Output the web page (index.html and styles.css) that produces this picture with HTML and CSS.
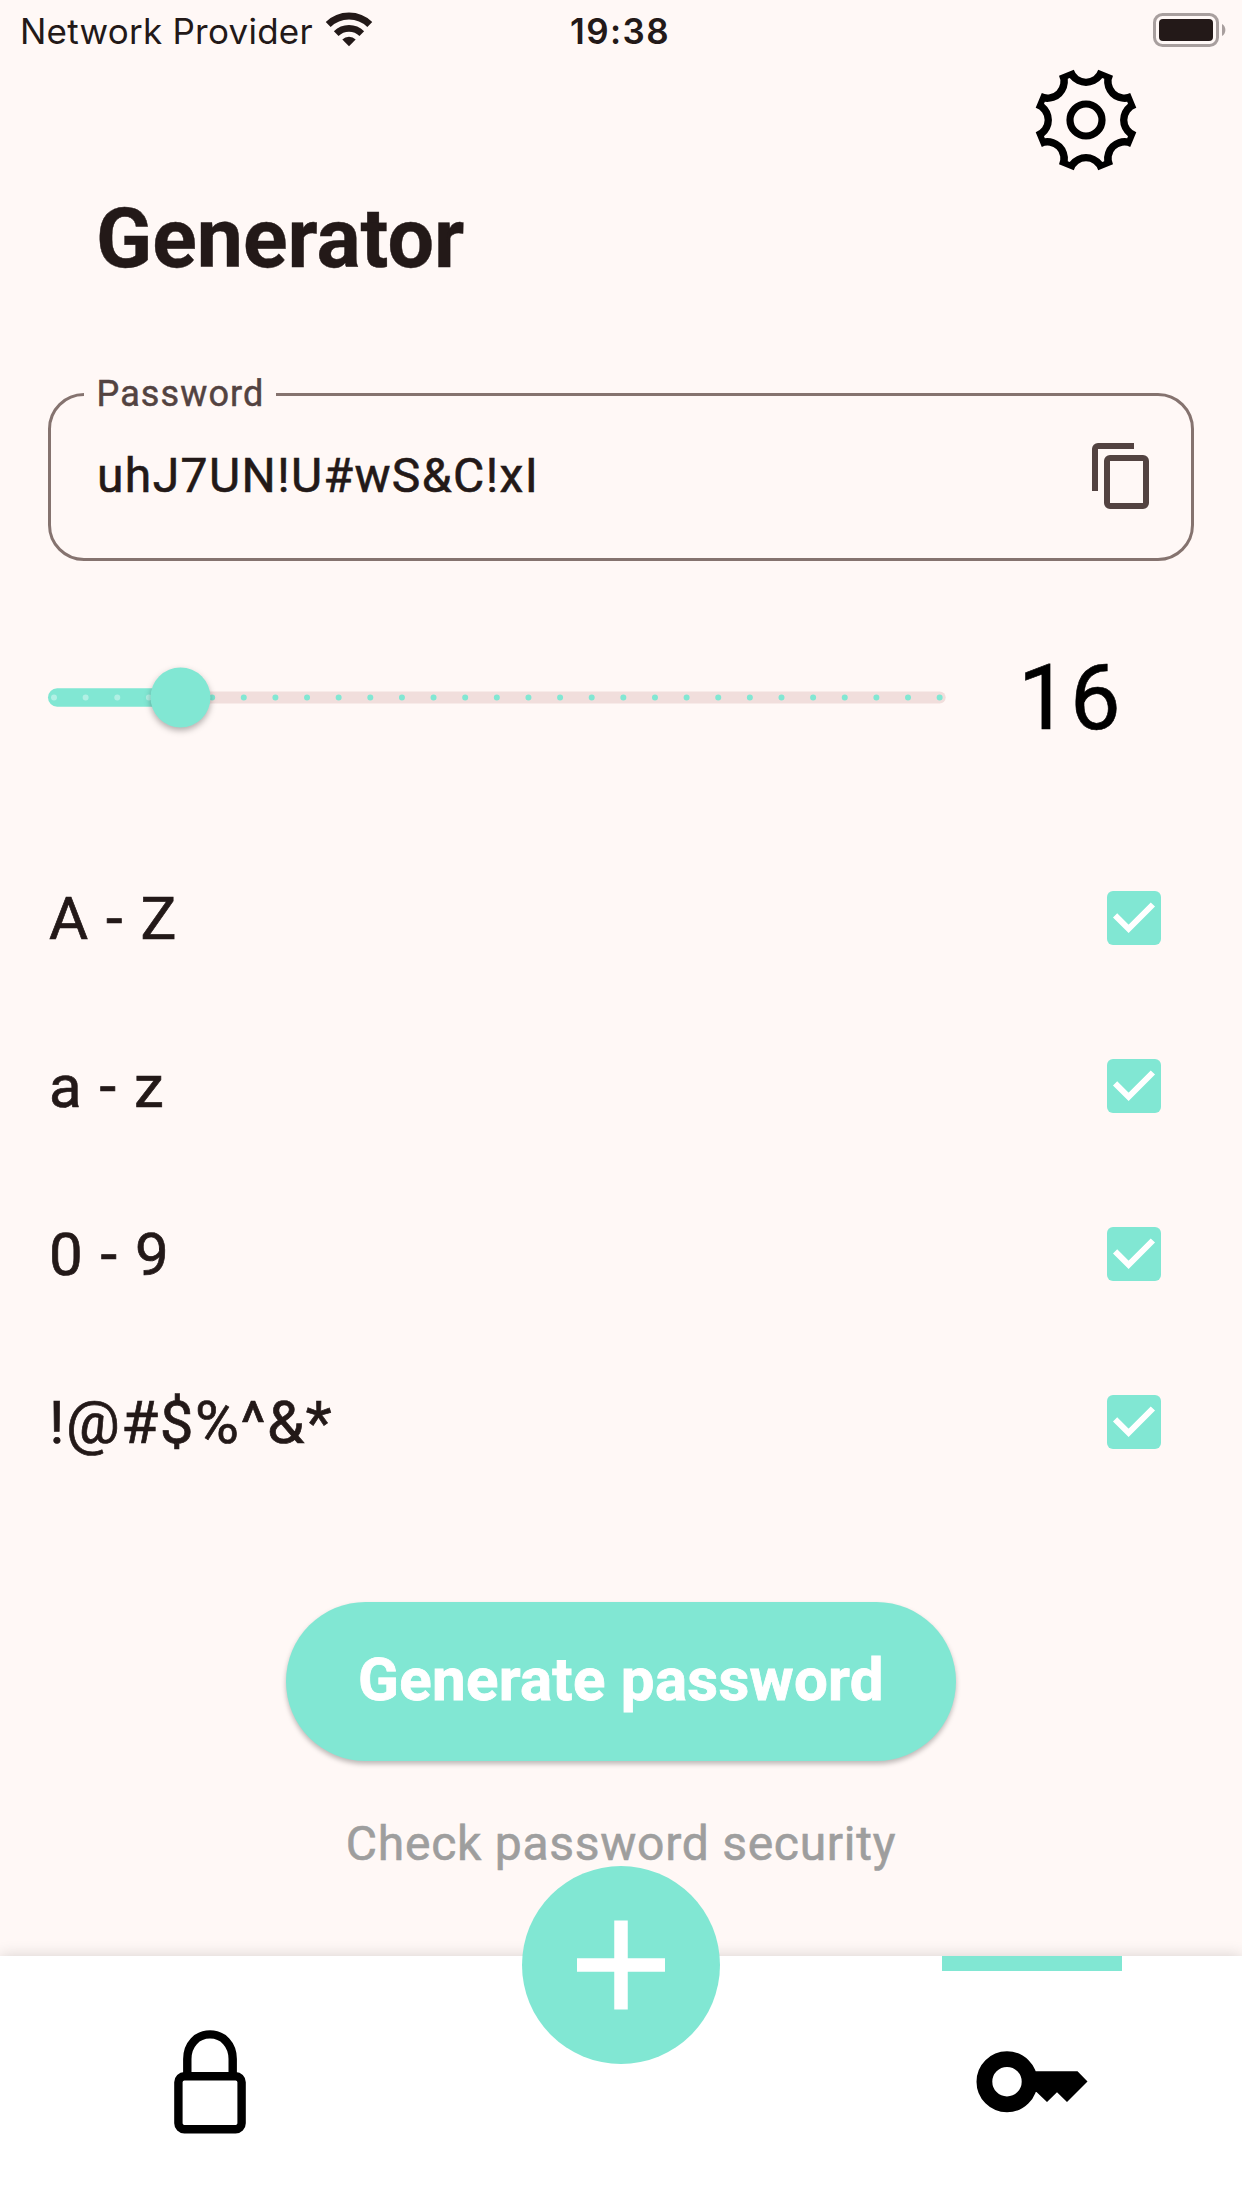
FILE: index.html
```html
<!DOCTYPE html>
<html lang="en">
<head>
<meta charset="utf-8">
<title>Generator</title>
<link rel="stylesheet" href="styles.css">
</head>
<body>
<div class="screen">
  <div class="status">
    <div class="carrier"><span class="carrier-name">Network Provider</span>
      <svg class="wifi" width="48" height="36" viewBox="0 0 48 36"><g fill="none" stroke="#231918"><path d="M3.2 12.6A29.6 29.6 0 0 1 44.8 12.6" stroke-width="7"/><path d="M11.2 21.6A18.2 18.2 0 0 1 36.8 21.6" stroke-width="6.6"/></g><path d="M24 34.2L17.3 27.4A9.5 9.5 0 0 1 30.7 27.4Z" fill="#231918"/></svg>
    </div>
    <span class="clock">19:38</span>
    <svg class="battery" width="76" height="36" viewBox="0 0 76 36"><rect x="2.5" y="2.5" width="63" height="31" rx="8" fill="none" stroke="#a89f9e" stroke-width="3"/><rect x="7" y="7" width="54" height="22" rx="4" fill="#231918"/><path d="M70 12a7 7 0 0 1 0 12Z" fill="#a89f9e"/></svg>
  </div>
  <div class="toolbar">
    <svg width="120" height="120" viewBox="-60 -60 120 120"><path fill-rule="evenodd" d="M-12.2-50.3A12.8 12.8 0 0 0 12.2-50.3L27-44.2A12.8 12.8 0 0 0 44.2-27L50.3-12.2A12.8 12.8 0 0 0 50.3 12.2L44.2 27A12.8 12.8 0 0 0 27 44.2L12.2 50.3A12.8 12.8 0 0 0-12.2 50.3L-27 44.2A12.8 12.8 0 0 0-44.2 27L-50.3 12.2A12.8 12.8 0 0 0-50.3-12.2L-44.2-27A12.8 12.8 0 0 0-27-44.2ZM-16.3-42A20.7 20.7 0 0 0 16.3-42L18.2-41.2A20.7 20.7 0 0 0 41.2-18.2L42-16.3A20.7 20.7 0 0 0 42 16.3L41.2 18.2A20.7 20.7 0 0 0 18.2 41.2L16.3 42A20.7 20.7 0 0 0-16.3 42L-18.2 41.2A20.7 20.7 0 0 0-41.2 18.2L-42 16.3A20.7 20.7 0 0 0-42-16.3L-41.2-18.2A20.7 20.7 0 0 0-18.2-41.2Z"/><circle r="16" fill="none" stroke="#000" stroke-width="7.2"/></svg>
  </div>
  <h1 class="title">Generator</h1>
  <fieldset class="field">
    <legend class="label">Password</legend>
    <div class="field-body">
      <span class="value">uhJ7UN!U#wS&amp;C!xI</span>
      <svg width="72" height="72" viewBox="0 0 24 24"><path fill="#534341" d="M19 21H8V7h11m0-2H8a2 2 0 0 0-2 2v14a2 2 0 0 0 2 2h11a2 2 0 0 0 2-2V7a2 2 0 0 0-2-2m-3-4H4a2 2 0 0 0-2 2v14h2V3h12V1Z"/></svg>
    </div>
  </fieldset>
  <div class="length">
    <svg class="slider" width="898" height="80" viewBox="0 0 898 80">
      <path d="M132 40.5H891.7" stroke="#f1dedc" stroke-width="12" stroke-linecap="round"/>
      <path d="M9.2 40.5H132" stroke="#81e7d3" stroke-width="18.5" stroke-linecap="round"/>
      <path d="M6 40.5H132" stroke="#b1f0e4" stroke-width="6" stroke-linecap="round" stroke-dasharray="0 31.63"/>
      <path d="M164.15 40.5H892" stroke="#81e7d3" stroke-width="6" stroke-linecap="round" stroke-dasharray="0 31.63"/>
      <circle class="thumb" cx="132.5" cy="40.5" r="30" fill="#81e7d3"/>
    </svg>
    <span class="number">16</span>
  </div>
  <div class="options">
    <div class="option"><span>A - Z</span><svg class="check" viewBox="0 0 54 54"><path d="M8.1 24.3L21.6 37.8L45.9 13.5"/></svg></div>
    <div class="option"><span>a - z</span><svg class="check" viewBox="0 0 54 54"><path d="M8.1 24.3L21.6 37.8L45.9 13.5"/></svg></div>
    <div class="option"><span>0 - 9</span><svg class="check" viewBox="0 0 54 54"><path d="M8.1 24.3L21.6 37.8L45.9 13.5"/></svg></div>
    <div class="option"><span>!@#$%^&amp;*</span><svg class="check" viewBox="0 0 54 54"><path d="M8.1 24.3L21.6 37.8L45.9 13.5"/></svg></div>
  </div>
  <button class="generate">Generate password</button>
  <div class="security">Check password security</div>
  <nav class="nav">
    <div class="tab tab-lock"><svg width="80" height="112" viewBox="0 0 80 112"><g fill="none" stroke="#000" stroke-width="8.4"><rect x="8.4" y="50.2" width="63.2" height="53" rx="6"/><path d="M17.3 50V33C17.3 18.5 27 8.4 40 8.4S62.7 18.5 62.7 33V50"/></g></svg></div>
    <div class="tab tab-key"><svg width="120" height="80" viewBox="0 0 120 80"><circle cx="35" cy="39.7" r="22.6" fill="none" stroke="#000" stroke-width="15.8"/><path d="M56 29.2H105.5L115.5 39.5L95 60L85 50.3L75 60L64.5 49.9H56Z"/></svg></div>
    <div class="fab"><svg width="90" height="90" viewBox="0 0 90 90"><path d="M45 .5V89.5M1 45H89" stroke="#fff" stroke-width="13.5"/></svg></div>
  </nav>
</div>
</body>
</html>
```
FILE: styles.css
```css
* { box-sizing: border-box; }
body { margin: 0; font-family: Roboto, "Liberation Sans", sans-serif; color: #231918; }
svg { display: block; flex: none; }

.screen {
  width: 1242px;
  height: 2208px;
  background: #fff8f6;
  display: flex;
  flex-direction: column;
  overflow: hidden;
}

.status {
  height: 60px;
  padding: 0 14px 0 20px;
  display: grid;
  grid-template-columns: 1fr auto 1fr;
  align-items: center;
  font-family: Inter, sans-serif;
  font-size: 35px;
}
.carrier { display: flex; align-items: center; gap: 12px; white-space: nowrap; }
.carrier-name { padding-top: 2px; line-height: 58px; letter-spacing: 0.25px; }
.clock { padding-top: 2px; font-weight: 600; letter-spacing: 1.4px; line-height: 58px; margin-right: 8px; }
.battery { justify-self: end; }

.toolbar { height: 120px; padding-right: 96px; display: flex; justify-content: flex-end; }

.title { margin: 9px 0 0; padding-left: 96px; font-size: 82.5px; line-height: 100px; font-weight: 700; -webkit-text-stroke: 0.4px; }

.field {
  margin: 84px 48px 0;
  height: 188px;
  padding: 0 33px;
  border: 3px solid #85736f;
  border-radius: 36px;
}
.label {
  width: 192px;
  padding: 0 0 1px 12.5px;
  font-size: 36px;
  line-height: 42px;
  letter-spacing: 1.125px;
  color: #534341;
  -webkit-text-stroke: 0.5px;
}
.field-body { display: flex; justify-content: space-between; align-items: flex-start; padding-top: 24px; }
.value { padding: 8px 0 0 13px; font-size: 48px; line-height: 56px; letter-spacing: 1.4px; -webkit-text-stroke: 0.6px; }

.length { height: 80px; margin: 96px 48px 0; display: flex; align-items: center; }
.slider { overflow: visible; }
.thumb { filter: drop-shadow(0 3px 3px rgba(0, 0, 0, 0.3)); }
.number { flex: 1; padding-top: 4px; text-align: center; font-size: 90px; line-height: 80px; color: #000; letter-spacing: 1.5px; -webkit-text-stroke: 0.6px; }

.options { margin-top: 97px; padding: 0 81px 0 49px; }
.option { height: 168px; display: flex; align-items: center; justify-content: space-between; font-size: 60px; letter-spacing: 1.5px; -webkit-text-stroke: 0.7px; }
.check { width: 54px; height: 54px; border-radius: 6px; background: #81e7d3; fill: none; stroke: #fff; stroke-width: 6; }

.generate {
  align-self: center;
  width: 670px;
  height: 159px;
  margin-top: 96px;
  padding: 0 0 4px;
  border: 0;
  border-radius: 80px;
  background: #81e7d3;
  color: #fff;
  font: 700 60px Roboto, sans-serif;
  letter-spacing: 0.3px;
  -webkit-text-stroke: 0.8px;
  box-shadow: 0 3px 5px rgba(0, 0, 0, 0.26);
}
.security { margin-top: 53px; text-align: center; font-size: 48px; line-height: 60px; letter-spacing: 0.73px; color: #9e9e9e; -webkit-text-stroke: 0.6px; }

.nav {
  position: relative;
  margin-top: auto;
  height: 252px;
  background: #fff;
  box-shadow: 0 0 15px rgba(0, 0, 0, 0.16);
  display: flex;
  justify-content: space-between;
}
.tab { height: 252px; display: flex; justify-content: center; }
.tab-lock { width: 180px; margin-left: 120px; padding-top: 70px; }
.tab-key { width: 180px; margin-right: 120px; padding-top: 86px; background: linear-gradient(#81e7d3, #81e7d3) top / 180px 15px no-repeat; }
.fab {
  position: absolute;
  left: 522px;
  top: -90px;
  width: 198px;
  height: 198px;
  border-radius: 50%;
  background: #81e7d3;
  display: flex;
  align-items: center;
  justify-content: center;
}
```
